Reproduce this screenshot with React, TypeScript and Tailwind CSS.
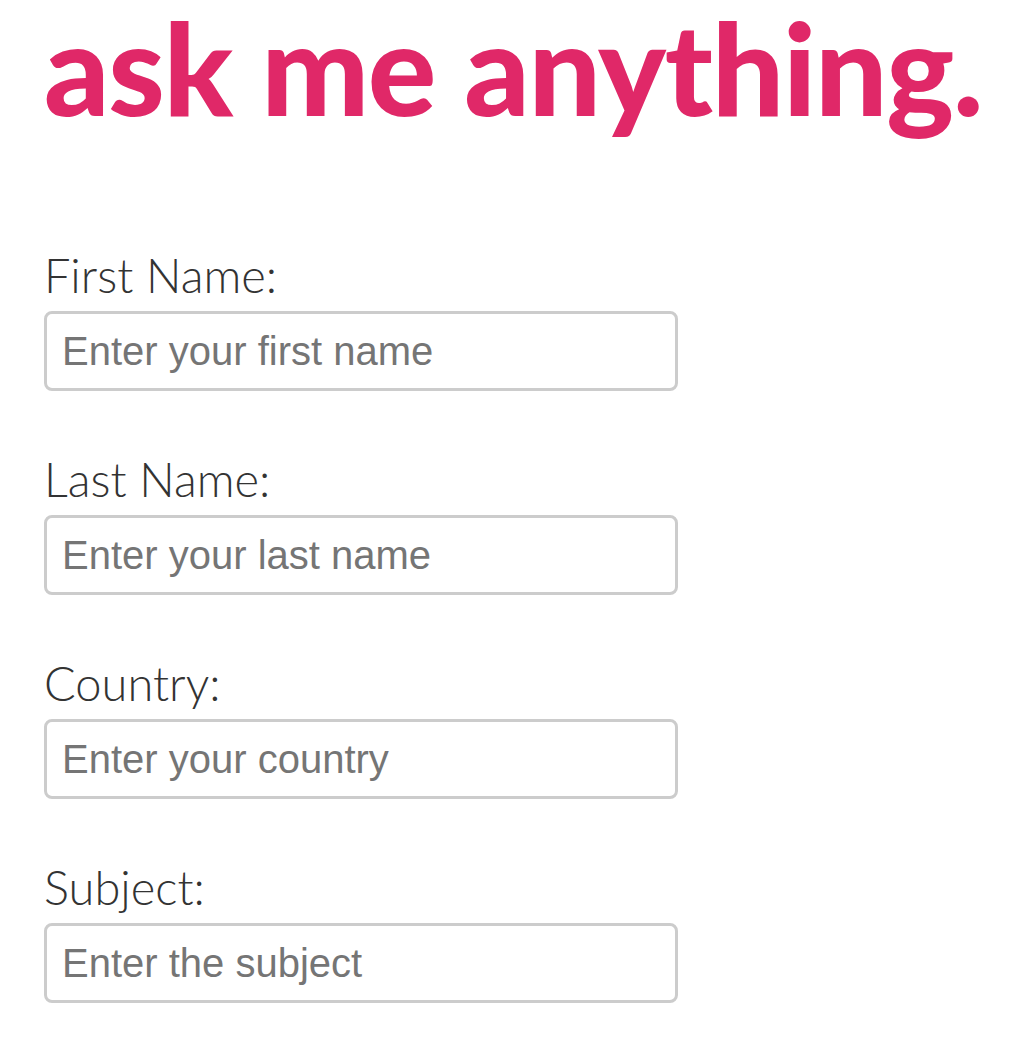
const FIELDS = [
  { id: "firstName", label: "First Name:", placeholder: "Enter your first name" },
  { id: "lastName", label: "Last Name:", placeholder: "Enter your last name" },
  { id: "country", label: "Country:", placeholder: "Enter your country" },
  { id: "subject", label: "Subject:", placeholder: "Enter the subject" },
];

export default function App() {
  return (
    <div className="min-h-screen bg-white px-[44px]">
      <h1 className="whitespace-nowrap font-['Lato',sans-serif] text-[128px] font-black leading-[134px] tracking-[-1.3px] text-[#e02868]">
        ask me anything.
      </h1>

      <form className="mt-[113px] flex flex-col gap-[60px]">
        {FIELDS.map((f) => (
          <div key={f.id} className="flex flex-col">
            <label
              htmlFor={f.id}
              className="font-['Lato',sans-serif] text-[47px] font-light leading-[56px] text-[#333]"
            >
              {f.label}
            </label>
            <input
              id={f.id}
              type="text"
              placeholder={f.placeholder}
              className="mt-[8px] h-[80px] w-[634px] rounded-[8px] border-[3px] border-[#cccccc] px-[15px] font-['Liberation_Sans',Arial,sans-serif] text-[40px] text-[#333] placeholder:text-[#757575] outline-none"
            />
          </div>
        ))}
      </form>
    </div>
  );
}
